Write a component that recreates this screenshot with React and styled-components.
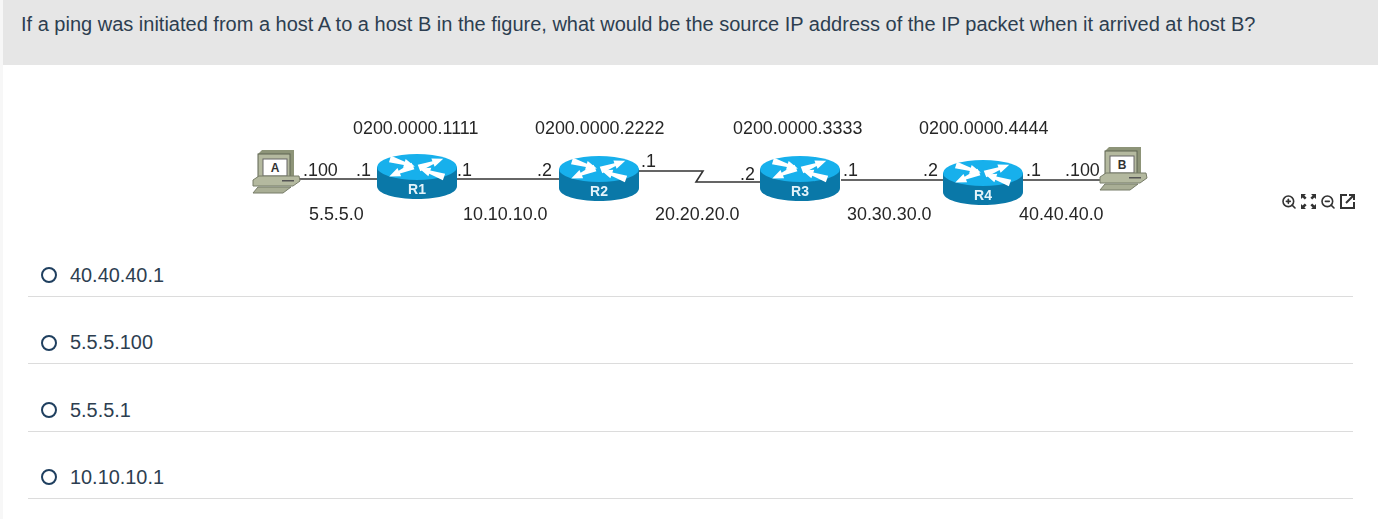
import React from "react";
import styled, { createGlobalStyle } from "styled-components";
import { ZoomIn, ZoomOut } from "lucide-react";

const GlobalStyle = createGlobalStyle`
  html, body {
    margin: 0;
    padding: 0;
    background: #fff;
  }
  body {
    font-family: "Liberation Sans", Arial, sans-serif;
    color: #2d3e50;
  }
`;

const options = ["40.40.40.1", "5.5.5.100", "5.5.5.1", "10.10.10.1"];

const topLabels = [
  { x: 353, text: "0200.0000.1111" },
  { x: 535, text: "0200.0000.2222" },
  { x: 733, text: "0200.0000.3333" },
  { x: 919, text: "0200.0000.4444" },
];

const netLabels = [
  { x: 309, text: "5.5.5.0" },
  { x: 463, text: "10.10.10.0" },
  { x: 655, text: "20.20.20.0" },
  { x: 847, text: "30.30.30.0" },
  { x: 1019, text: "40.40.40.0" },
];

const portLabels = [
  { x: 303, y: 176, text: ".100" },
  { x: 356, y: 176, text: ".1" },
  { x: 457, y: 176, text: ".1" },
  { x: 537, y: 176, text: ".2" },
  { x: 641, y: 167, text: ".1" },
  { x: 740, y: 180, text: ".2" },
  { x: 843, y: 176, text: ".1" },
  { x: 923, y: 176, text: ".2" },
  { x: 1026, y: 176, text: ".1" },
  { x: 1065, y: 176, text: ".100" },
];

const routers = [
  { x: 417, y: 167, name: "R1" },
  { x: 599, y: 169, name: "R2" },
  { x: 800, y: 169, name: "R3" },
  { x: 983, y: 173, name: "R4" },
];

// router top arrows: [start x, start y, angle]
const arrows = [
  [-27, -8, 17],
  [2, 1, -21],
  [-4, -1, 156],
  [27, 10, 199],
];

function Router({ x, y, name }) {
  return (
    <g transform={`translate(${x} ${y})`}>
      <path d="M-40 0V19C-40 27-22 32 0 32S40 27 40 19V0Z" fill="#0a78a8" />
      <ellipse cx="0" cy="0" rx="40" ry="13" fill="#17b0ec" />
      {arrows.map(([ax, ay, angle]) => (
        <path
          key={angle}
          transform={`translate(${ax} ${ay}) rotate(${angle})`}
          fill="#fff"
          d="M0-3.5 15-1.6V-4.5L26 0 15 4.5V1.6L0 3.5Z"
        />
      ))}
      <RouterName x="0" y="27">
        {name}
      </RouterName>
    </g>
  );
}

function Host({ x, y, name }) {
  return (
    <g transform={`translate(${x} ${y})`}>
      <path d="M5 4 9 0H41V27H5Z" fill="#8d9478" />
      <rect x="5" y="4" width="32" height="24" fill="#b4b99f" stroke="#5f6552" />
      <rect x="10" y="9" width="24" height="17" fill="#fff" stroke="#666" />
      <HostName x="22" y="22">
        {name}
      </HostName>
      <path d="M0 30 6 26H46L47 31 40 36H0Z" fill="#b4b99f" stroke="#777c68" />
      <path d="M5 37H38L30 43H0Z" fill="#a9ae95" stroke="#777c68" />
      <rect x="29" y="30" width="12" height="1.5" fill="#555" />
    </g>
  );
}

function Diagram() {
  return (
    <Figure viewBox="0 0 1378 130" width="1378" height="130">
      <g transform="translate(0 -110)">
        <g fill="none" stroke="#333" strokeWidth="1.6">
          <path d="M298 179H559" />
          <path d="M639 171H703L696 182H760" />
          <path d="M841 180H1100" />
        </g>
        <Host x={253} y={150} name="A" />
        <Host x={1100} y={147} name="B" />
        {routers.map((r) => (
          <Router key={r.name} {...r} />
        ))}
        {topLabels.map((l) => (
          <FigureText key={l.text} x={l.x} y={134}>
            {l.text}
          </FigureText>
        ))}
        {portLabels.map((l) => (
          <FigureText key={`${l.x}-${l.text}`} x={l.x} y={l.y}>
            {l.text}
          </FigureText>
        ))}
        {netLabels.map((l) => (
          <FigureText key={l.text} x={l.x} y={220}>
            {l.text}
          </FigureText>
        ))}
      </g>
    </Figure>
  );
}

function ExpandIcon() {
  return (
    <svg width="17" height="17" viewBox="0 0 17 17" fill="#333">
      <path d="M1 1H6L4.4 2.6 6.6 4.8 4.8 6.6 2.6 4.4 1 6ZM16 1V6L14.4 4.4 12.2 6.6 10.4 4.8 12.6 2.6 11 1ZM1 16V11L2.6 12.6 4.8 10.4 6.6 12.2 4.4 14.4 6 16ZM16 16H11L12.6 14.4 10.4 12.2 12.2 10.4 14.4 12.6 16 11Z" />
    </svg>
  );
}

function OpenIcon() {
  return (
    <svg width="17" height="17" viewBox="0 0 17 17" fill="none" stroke="#333" strokeWidth="2">
      <path d="M8 2H2V15H15V9" />
      <path d="M7 10 15 2M10 2H15V7" />
    </svg>
  );
}

export default function App() {
  return (
    <Page>
      <GlobalStyle />
      <Question>
        If a ping was initiated from a host A to a host B in the figure, what
        would be the source IP address of the IP packet when it arrived at host
        B?
      </Question>
      <FigureRow>
        <Diagram />
        <Tools>
          <ZoomIn size={16} strokeWidth={2.4} />
          <ExpandIcon />
          <ZoomOut size={16} strokeWidth={2.4} />
          <OpenIcon />
        </Tools>
      </FigureRow>
      <OptionList>
        {options.map((o) => (
          <Option key={o}>
            <Radio />
            {o}
          </Option>
        ))}
      </OptionList>
    </Page>
  );
}

const Page = styled.div`
  width: 1378px;
  height: 519px;
  overflow: hidden;
  background: #fff;
  box-sizing: border-box;
  padding-left: 3px;
  box-shadow: inset 3px 0 0 #f7f7f7;
`;

const Question = styled.div`
  box-sizing: border-box;
  height: 65px;
  padding: 12px 18px;
  background: #e6e6e6;
  font-size: 20px;
  line-height: 24px;
  white-space: nowrap;
`;

const FigureRow = styled.div`
  position: relative;
  height: 164.6px;
  margin-left: -3px;
  padding-top: 45px;
  box-sizing: border-box;
`;

const Figure = styled.svg`
  display: block;
  filter: blur(0.35px);
`;

const FigureText = styled.text`
  font-family: "Liberation Sans", Arial, sans-serif;
  font-size: 17.9px;
  fill: #262626;
`;

const RouterName = styled.text`
  font-family: "Liberation Sans", Arial, sans-serif;
  font-size: 14px;
  font-weight: 700;
  fill: #e4f3fa;
  text-anchor: middle;
`;

const HostName = styled.text`
  font-family: "Liberation Sans", Arial, sans-serif;
  font-size: 12px;
  font-weight: 700;
  fill: #333;
  text-anchor: middle;
`;

const Tools = styled.div`
  position: absolute;
  top: 128px;
  left: 1281px;
  display: flex;
  align-items: center;
  gap: 3px;
  color: #333;
`;

const OptionList = styled.div`
  margin: 0 25px;
`;

const Option = styled.div`
  display: flex;
  align-items: center;
  gap: 13px;
  box-sizing: border-box;
  height: 67.4px;
  padding: 25px 13px 0;
  border-bottom: 1px solid #dcdcdc;
  font-size: 19.9px;
`;

const Radio = styled.span`
  display: block;
  width: 16px;
  height: 16px;
  box-sizing: border-box;
  border: 2px solid #1f3f5f;
  border-radius: 50%;
`;
